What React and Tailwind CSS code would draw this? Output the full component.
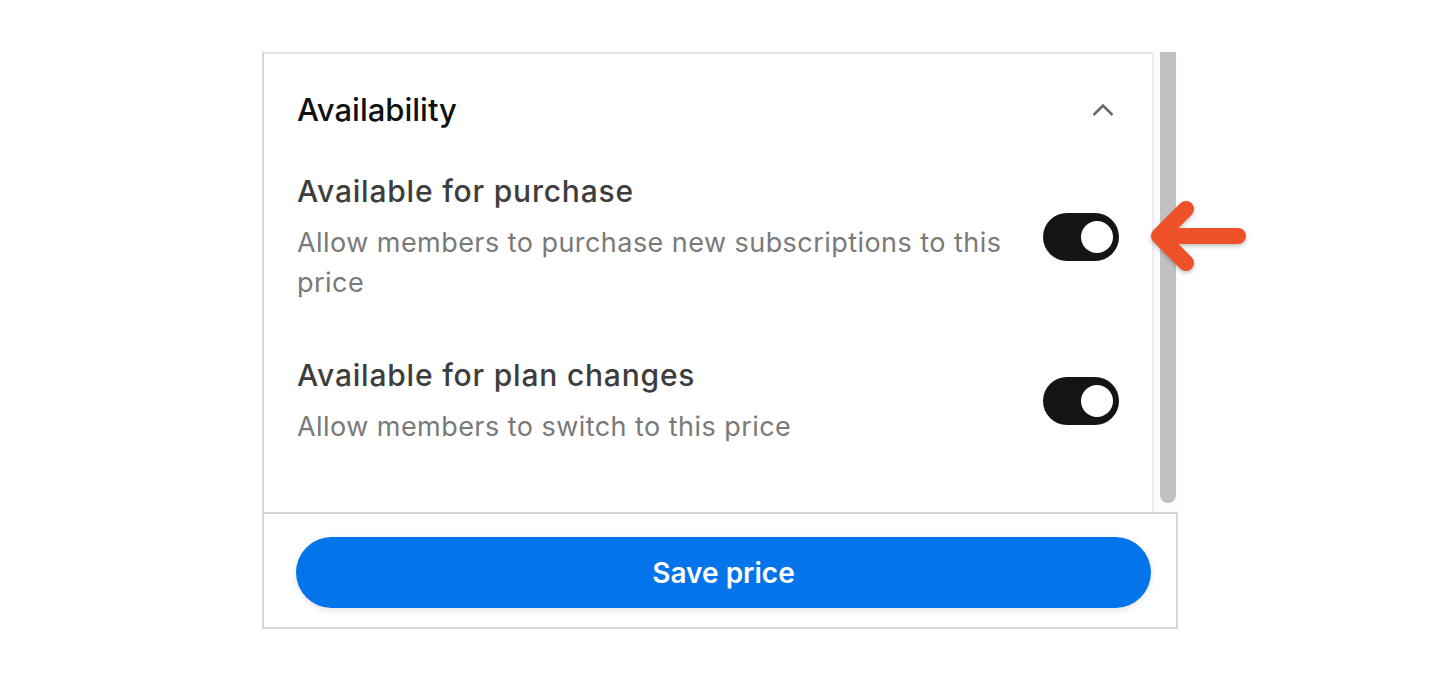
import React, { useState } from "react";

const Toggle = ({ on, onChange }) => (
  <button
    onClick={onChange}
    className={`flex h-[48px] w-[76px] shrink-0 items-center rounded-full px-[6px] ${on ? "bg-[#141414]" : "bg-[#e5e5e5]"}`}
  >
    <span
      className={`h-[32px] w-[32px] rounded-full bg-white ${on ? "ml-auto" : ""}`}
    />
  </button>
);

const Row = ({ title, desc, on, onChange, className }) => (
  <div className={`flex items-center gap-[24px] ${className}`}>
    <div className="flex-1">
      <div className="text-[30px] font-medium leading-[40px] tracking-[0.8px] text-[#3d3d3d]">{title}</div>
      <div className="mt-[12px] text-[27px] leading-[40px] tracking-[0.45px] text-[#7a7a7a]">{desc}</div>
    </div>
    <Toggle on={on} onChange={onChange} />
  </div>
);

export default function App() {
  const [purchase, setPurchase] = useState(true);
  const [changes, setChanges] = useState(true);

  return (
    <div className="min-h-screen bg-white font-['Inter',sans-serif]">
      <div className="relative mx-auto w-[916px] pt-[52px]">
        {/* scroll area */}
        <div className="flex h-[460px]">
          <div className="flex-1 border-l-2 border-t-2 border-l-[#d6d6d6] border-t-[#e5e5e5] px-[33px] pt-[36px]">
            <div className="flex items-center justify-between">
              <h2 className="text-[31px] font-medium leading-[40px] text-[#111]">Availability</h2>
              <svg width="22" height="14" viewBox="0 0 22 14" className="mr-[5px]">
                <path d="M1.5 12 L11 2.5 L20.5 12" fill="none" stroke="#6b6b6b" strokeWidth="2.5" />
              </svg>
            </div>
            <Row
              className="mt-[41px]"
              title="Available for purchase"
              desc="Allow members to purchase new subscriptions to this price"
              on={purchase}
              onChange={() => setPurchase(!purchase)}
            />
            <Row
              className="mt-[52px]"
              title="Available for plan changes"
              desc="Allow members to switch to this price"
              on={changes}
              onChange={() => setChanges(!changes)}
            />
          </div>
          {/* scrollbar */}
          <div className="flex w-[26px] border-l-2 border-[#ececec] bg-[#fcfcfc] pl-[6px]">
            <div className="h-[451px] w-[16px] rounded-b-full bg-[#c1c1c1]" />
          </div>
        </div>

        {/* footer */}
        <div className="border-2 border-[#d6d6d6] pb-[19px] pl-[32px] pr-[25px] pt-[23px]">
          <button className="h-[71px] w-full rounded-full bg-[#0374ea] text-[28px] font-semibold text-white shadow-[0_2px_6px_rgba(0,0,0,0.12)]">
            Save price
          </button>
        </div>

        {/* annotation arrow */}
        <svg
          width="120"
          height="95"
          viewBox="0 0 120 95"
          className="absolute left-[878px] top-[190px] drop-shadow-[0_2px_2px_rgba(0,0,0,0.25)]"
        >
          <path
            d="M98 46 L19 46 M46 19 L19 46 L46 73"
            fill="none"
            stroke="#ef5129"
            strokeWidth="16"
            strokeLinecap="round"
            strokeLinejoin="round"
          />
        </svg>
      </div>
    </div>
  );
}
